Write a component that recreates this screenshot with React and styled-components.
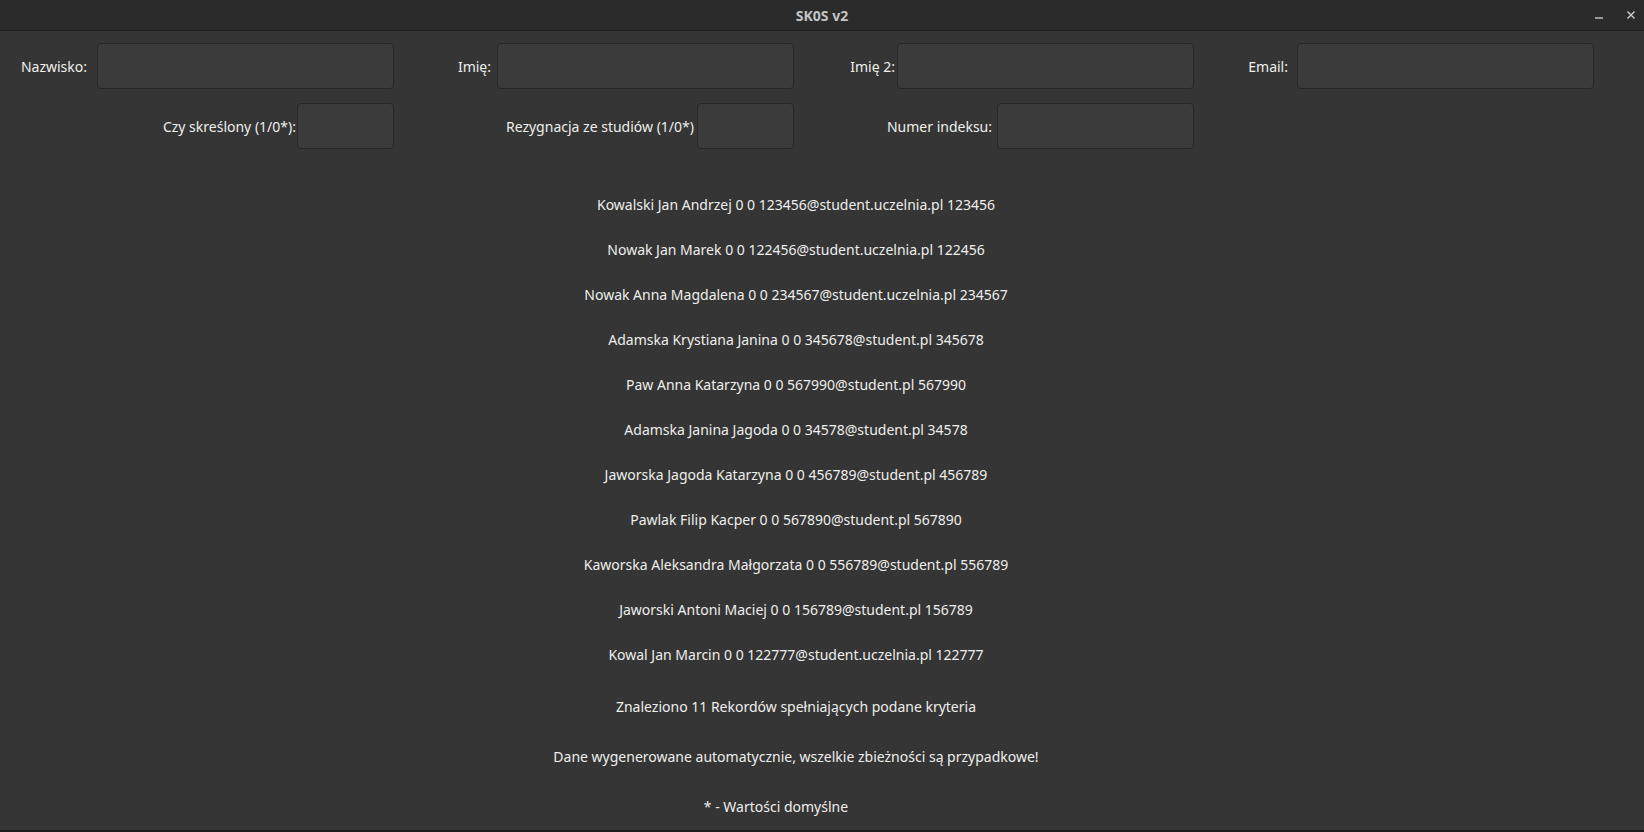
import React from 'react'
import styled, { createGlobalStyle } from 'styled-components'

const GlobalStyle = createGlobalStyle`
  html, body {
    margin: 0;
    padding: 0;
    background: #353535;
  }
  body {
    font-family: "Noto Sans", "Liberation Sans", sans-serif;
    color: #eeeeec;
  }
`

const Window = styled.div`
  width: 1644px;
  height: 832px;
  display: flex;
  flex-direction: column;
  background: #353535;
  box-sizing: border-box;
  border-bottom: 2px solid #1c1c1c;
  overflow: hidden;
`

const TitleBar = styled.header`
  position: relative;
  height: 30px;
  flex: none;
  display: flex;
  align-items: center;
  justify-content: center;
  background: #2b2b2b;
  border-bottom: 1px solid #1e1e1e;
`

const Title = styled.span`
  font-size: 14px;
  font-weight: 700;
  color: #c4c4c4;
`

const WindowControls = styled.div`
  position: absolute;
  right: 8px;
  top: 0;
  height: 30px;
  display: flex;
  align-items: center;
  gap: 22px;
`

const ControlIcon = styled.svg`
  width: 10px;
  height: 10px;
  stroke: #c8c8c8;
  stroke-width: 1.4;
  fill: none;
`

const Content = styled.main`
  flex: 1;
  display: flex;
  flex-direction: column;
  padding-top: 12px;
`

const FormGrid = styled.form`
  display: grid;
  grid-template-columns: 97px repeat(15, 100px);
  grid-auto-rows: 46px;
  row-gap: 14px;
  margin: 0;
`

const Label = styled.label`
  grid-column: ${(p) => p.col} / span ${(p) => p.span || 1};
  grid-row: ${(p) => p.row};
  display: flex;
  align-items: center;
  justify-content: flex-end;
  padding-right: ${(p) => p.gap}px;
  font-size: 14px;
  white-space: nowrap;
`

const Field = styled.input`
  grid-column: ${(p) => p.col} / span ${(p) => p.span};
  grid-row: ${(p) => p.row};
  width: calc(100% - 3px);
  height: 46px;
  box-sizing: border-box;
  background: #3b3b3b;
  border: 1px solid #272727;
  border-radius: 4px;
  color: #eeeeec;
  font-family: inherit;
  font-size: 14px;
  padding: 0 8px;
  outline: none;
`

// results are centred over the form's columns, not the whole window
const Results = styled.section`
  margin-top: 33px;
  padding-right: 52px;
  display: flex;
  flex-direction: column;
`

const Records = styled.ul`
  list-style: none;
  margin: 0;
  padding: 0;
`

const Record = styled.li`
  height: 45px;
  display: flex;
  align-items: center;
  justify-content: center;
  font-size: 14px;
  white-space: nowrap;
`

const Notes = styled.div`
  margin-top: 4px;
  display: flex;
  flex-direction: column;
`

const Note = styled.p`
  margin: 0;
  height: 50px;
  display: flex;
  align-items: center;
  justify-content: center;
  padding-right: ${(p) => p.shift || 0}px;
  font-size: 14px;
  white-space: nowrap;
`

const fields = [
  { label: 'Nazwisko:', row: 1, labelCol: 1, labelSpan: 1, gap: 10, col: 2, span: 3 },
  { label: 'Imię:', row: 1, labelCol: 5, labelSpan: 1, gap: 6, col: 6, span: 3 },
  { label: 'Imię 2:', row: 1, labelCol: 9, labelSpan: 1, gap: 2, col: 10, span: 3 },
  { label: 'Email:', row: 1, labelCol: 13, labelSpan: 1, gap: 9, col: 14, span: 3 },
  { label: 'Czy skreślony (1/0*):', row: 2, labelCol: 2, labelSpan: 2, gap: 1, col: 4, span: 1 },
  { label: 'Rezygnacja ze studiów (1/0*)', row: 2, labelCol: 6, labelSpan: 2, gap: 3, col: 8, span: 1 },
  { label: 'Numer indeksu:', row: 2, labelCol: 9, labelSpan: 2, gap: 5, col: 11, span: 2 },
]

const students = [
  'Kowalski Jan Andrzej 0 0 123456@student.uczelnia.pl 123456',
  'Nowak Jan Marek 0 0 122456@student.uczelnia.pl 122456',
  'Nowak Anna Magdalena 0 0 234567@student.uczelnia.pl 234567',
  'Adamska Krystiana Janina 0 0 345678@student.pl 345678',
  'Paw Anna Katarzyna 0 0 567990@student.pl 567990',
  'Adamska Janina Jagoda 0 0 34578@student.pl 34578',
  'Jaworska Jagoda Katarzyna 0 0 456789@student.pl 456789',
  'Pawlak Filip Kacper 0 0 567890@student.pl 567890',
  'Kaworska Aleksandra Małgorzata 0 0 556789@student.pl 556789',
  'Jaworski Antoni Maciej 0 0 156789@student.pl 156789',
  'Kowal Jan Marcin 0 0 122777@student.uczelnia.pl 122777',
]

export default function App() {
  return (
    <>
      <GlobalStyle />
      <Window>
        <TitleBar>
          <Title>SK0S v2</Title>
          <WindowControls>
            <ControlIcon viewBox="0 0 10 10">
              <line x1="1" y1="8" x2="9" y2="8" />
            </ControlIcon>
            <ControlIcon viewBox="0 0 10 10">
              <line x1="1.5" y1="1.5" x2="8.5" y2="8.5" />
              <line x1="8.5" y1="1.5" x2="1.5" y2="8.5" />
            </ControlIcon>
          </WindowControls>
        </TitleBar>
        <Content>
          <FormGrid onSubmit={(e) => e.preventDefault()}>
            {fields.map((f) => (
              <React.Fragment key={f.label}>
                <Label row={f.row} col={f.labelCol} span={f.labelSpan} gap={f.gap}>
                  {f.label}
                </Label>
                <Field row={f.row} col={f.col} span={f.span} />
              </React.Fragment>
            ))}
          </FormGrid>
          <Results>
            <Records>
              {students.map((s) => (
                <Record key={s}>{s}</Record>
              ))}
            </Records>
            <Notes>
              <Note>Znaleziono 11 Rekordów spełniających podane kryteria</Note>
              <Note>Dane wygenerowane automatycznie, wszelkie zbieżności są przypadkowe!</Note>
              <Note shift={40}>* - Wartości domyślne</Note>
            </Notes>
          </Results>
        </Content>
      </Window>
    </>
  )
}
